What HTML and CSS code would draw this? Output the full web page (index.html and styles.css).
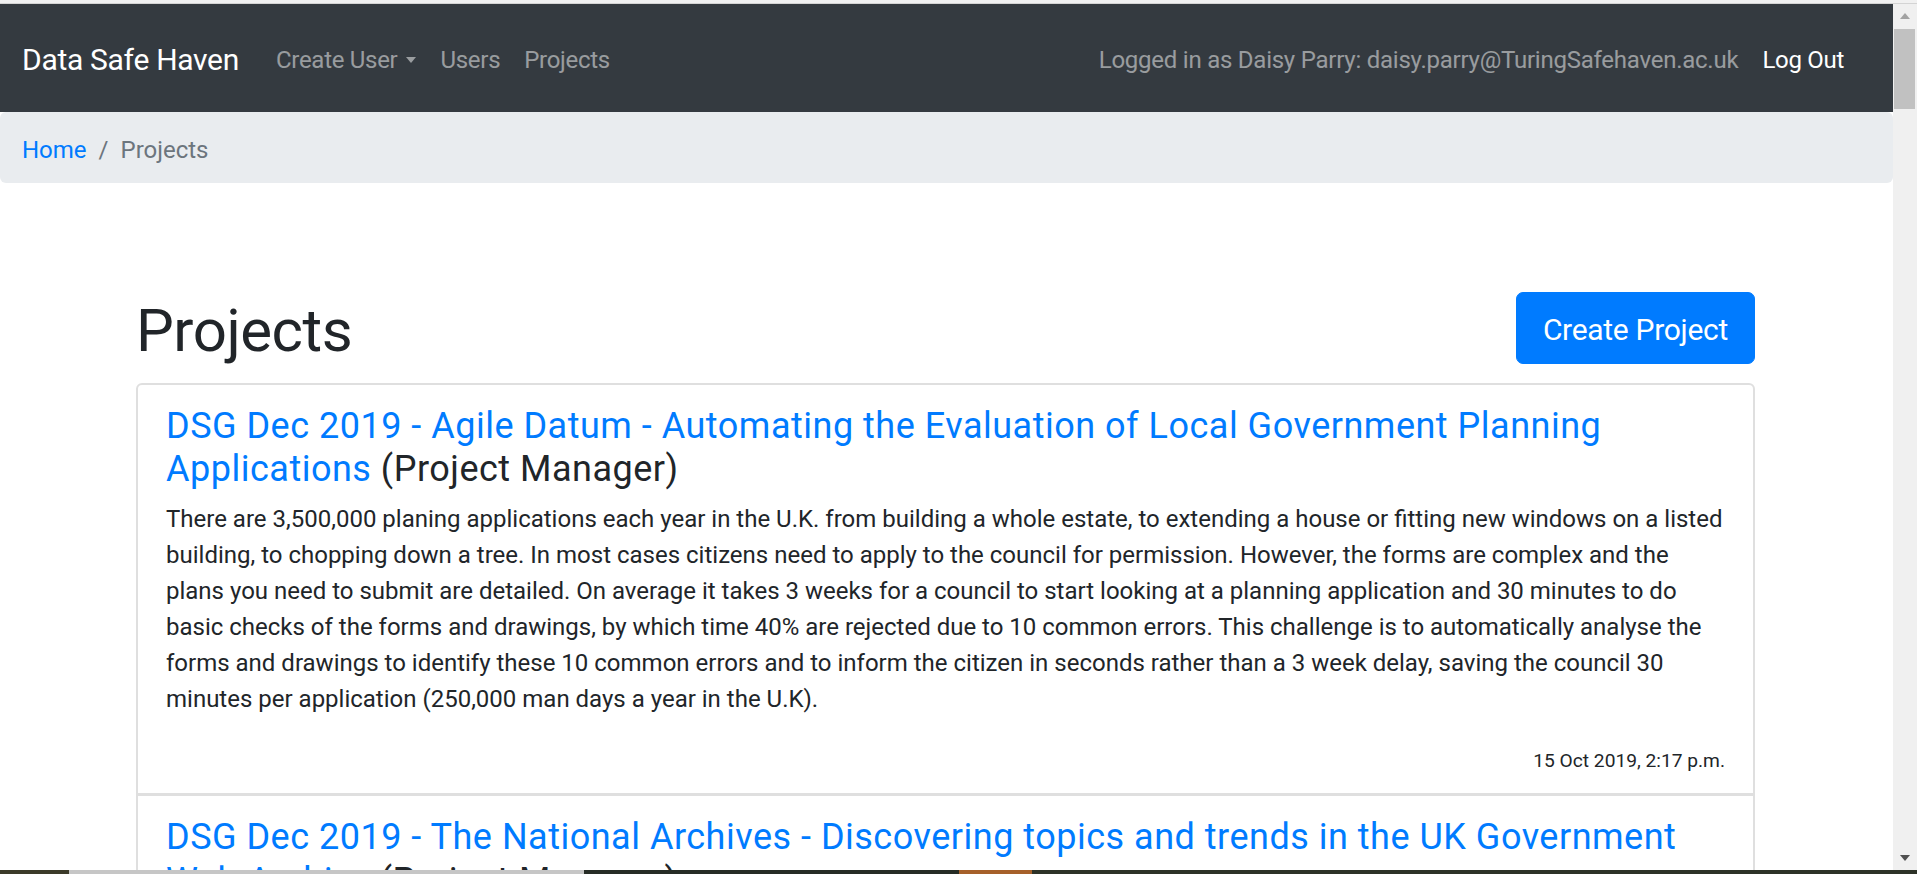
FILE: index.html
```html
<!DOCTYPE html>
<html lang="en">
<head>
<meta charset="utf-8">
<title>Projects - Data Safe Haven</title>
<link rel="stylesheet" href="styles.css">
</head>
<body>
<div class="frame-top"></div>
<div class="window">
  <div class="page">
    <nav class="navbar">
      <a class="brand" href="#">Data Safe Haven</a>
      <ul class="nav">
        <li><a class="nav-link dropdown-toggle" href="#">Create User</a></li>
        <li><a class="nav-link" href="#">Users</a></li>
        <li><a class="nav-link" href="#">Projects</a></li>
      </ul>
      <div class="nav-right">
        <span class="navbar-text">Logged in as Daisy Parry: daisy.parry@TuringSafehaven.ac.uk</span>
        <a class="nav-link logout" href="#">Log Out</a>
      </div>
    </nav>
    <ol class="breadcrumb">
      <li class="crumb"><a class="crumb-link" href="#">Home</a></li>
      <li class="crumb crumb-active">Projects</li>
    </ol>
    <main class="container">
      <div class="page-header">
        <h1 class="page-title">Projects</h1>
        <a class="btn" href="#">Create Project</a>
      </div>
      <div class="list">
        <div class="item">
          <h4 class="item-title"><a class="item-link" href="#">DSG Dec 2019 - Agile Datum - Automating the Evaluation of Local Government Planning Applications</a> (Project Manager)</h4>
          <p class="item-text">There are 3,500,000 planing applications each year in the U.K. from building a whole estate, to extending a house or fitting new windows on a listed building, to chopping down a tree. In most cases citizens need to apply to the council for permission. However, the forms are complex and the plans you need to submit are detailed. On average it takes 3 weeks for a council to start looking at a planning application and 30 minutes to do basic checks of the forms and drawings, by which time 40% are rejected due to 10 common errors. This challenge is to automatically analyse the forms and drawings to identify these 10 common errors and to inform the citizen in seconds rather than a 3 week delay, saving the council 30 minutes per application (250,000 man days a year in the U.K).</p>
          <div class="item-date"><small class="date">15 Oct 2019, 2:17 p.m.</small></div>
        </div>
        <div class="item">
          <h4 class="item-title"><a class="item-link" href="#">DSG Dec 2019 - The National Archives - Discovering topics and trends in the UK Government Web Archive</a> (Project Manager)</h4>
        </div>
      </div>
    </main>
  </div>
  <div class="scrollbar">
    <div class="sb-btn"><span class="sb-arrow-up"></span></div>
    <div class="sb-thumb"></div>
    <div class="sb-space"></div>
    <div class="sb-btn"><span class="sb-arrow-down"></span></div>
  </div>
</div>
<div class="taskbar">
  <span class="tb tb-1"></span>
  <span class="tb tb-2"></span>
  <span class="tb tb-3"></span>
  <span class="tb tb-4"></span>
  <span class="tb tb-5"></span>
</div>
</body>
</html>
```

FILE: styles.css
```css
* {
  box-sizing: border-box;
}

body {
  margin: 0;
  height: 874px;
  overflow: hidden;
  display: flex;
  flex-direction: column;
  font-family: Roboto, "Liberation Sans", sans-serif;
  font-size: 24px;
  line-height: 1.5;
  color: #212529;
  background: #fff;
}

.frame-top {
  flex: none;
  height: 4px;
  background: #f1f1f1;
  border-bottom: 1px solid #d4d4d4;
}

.window {
  flex: 1;
  min-height: 0;
  display: flex;
}

.page {
  flex: 1;
  min-width: 0;
  overflow: hidden;
  background: #fff;
}

/* Navbar */
.navbar {
  height: 108px;
  display: flex;
  align-items: center;
  padding: 3px 37px 0 22px;
  background: #343a40;
}

.brand {
  font-size: 30px;
  line-height: 45px;
  letter-spacing: -0.01em;
  color: #fff;
  text-decoration: none;
  margin-right: 25px;
  white-space: nowrap;
}

.nav {
  display: flex;
  list-style: none;
  margin: 0;
  padding: 0;
}

.nav-link {
  display: block;
  padding: 0 12px;
  line-height: 36px;
  letter-spacing: -0.012em;
  color: rgba(255, 255, 255, 0.5);
  text-decoration: none;
  white-space: nowrap;
}

.dropdown-toggle::after {
  content: "";
  display: inline-block;
  margin-left: 9px;
  vertical-align: 5px;
  border-top: 6px solid;
  border-right: 5.5px solid transparent;
  border-left: 5.5px solid transparent;
  border-bottom: 0;
}

.nav-right {
  margin-left: auto;
  display: flex;
  align-items: center;
}

.navbar-text {
  color: rgba(255, 255, 255, 0.5);
  line-height: 36px;
  letter-spacing: -0.01em;
  margin-right: 12px;
  white-space: nowrap;
}

.logout {
  color: #fff;
}

/* Breadcrumb */
.breadcrumb {
  display: flex;
  align-items: center;
  height: 71px;
  margin: 0;
  padding: 4px 22px 0;
  list-style: none;
  background: #e9ecef;
  border-radius: 6px;
}

.crumb-link {
  color: #007bff;
  text-decoration: none;
}

.crumb + .crumb::before {
  content: "/";
  padding: 0 12px;
  color: #6c757d;
}

.crumb-active {
  color: #6c757d;
}

/* Content */
.container {
  width: 1619px;
  margin-left: 136px;
  padding-top: 109px;
}

.page-header {
  height: 72px;
  display: flex;
  justify-content: space-between;
  align-items: flex-start;
  margin-bottom: 19px;
}

.page-title {
  margin: 0;
  padding-top: 3px;
  font-size: 60px;
  line-height: 72px;
  font-weight: 400;
  letter-spacing: -0.008em;
  color: #212529;
}

.btn {
  height: 72px;
  display: flex;
  align-items: center;
  padding: 3px 26px 0;
  font-size: 30px;
  letter-spacing: -0.01em;
  color: #fff;
  background: #007bff;
  border: 1px solid #007bff;
  border-radius: 7px;
  text-decoration: none;
  white-space: nowrap;
}

.item {
  border: 2px solid #dfdfdf;
  padding: 20px 28px 16px;
}

.item:first-child {
  border-radius: 6px 6px 0 0;
}

.item + .item {
  border-top-width: 1px;
}

.item-title {
  margin: 0 0 10px;
  font-size: 36px;
  line-height: 1.2;
  font-weight: 400;
  letter-spacing: 0.014em;
  color: #212529;
}

.item-link {
  color: #007bff;
  text-decoration: none;
}

.item-text {
  margin: 0 0 24px;
}

.item-date {
  text-align: right;
}

.date {
  font-size: 19.2px;
}

/* Fake window chrome */
.scrollbar {
  flex: none;
  width: 24px;
  display: flex;
  flex-direction: column;
  background: #f0f0f0;
}

.sb-btn {
  flex: none;
  height: 24px;
  display: flex;
  align-items: center;
  justify-content: center;
}

.sb-arrow-up {
  width: 0;
  height: 0;
  border-left: 5.5px solid transparent;
  border-right: 5.5px solid transparent;
  border-bottom: 6px solid #a3a3a3;
}

.sb-arrow-down {
  width: 0;
  height: 0;
  border-left: 5.5px solid transparent;
  border-right: 5.5px solid transparent;
  border-top: 6px solid #505050;
}

.sb-thumb {
  flex: none;
  height: 80px;
  margin: 1px 2px 0 1px;
  background: #c1c1c1;
}

.sb-space {
  flex: 1;
}

.taskbar {
  flex: none;
  height: 4px;
  display: flex;
}

.tb {
  display: block;
  height: 4px;
}

.tb-1 { width: 69px; background: #3b3a29; }
.tb-2 { width: 515px; background: #c6c6c6; }
.tb-3 { width: 375px; background: #262c25; }
.tb-4 { width: 73px; background: #a6602a; }
.tb-5 { flex: 1; background: #2d3227; }
```
